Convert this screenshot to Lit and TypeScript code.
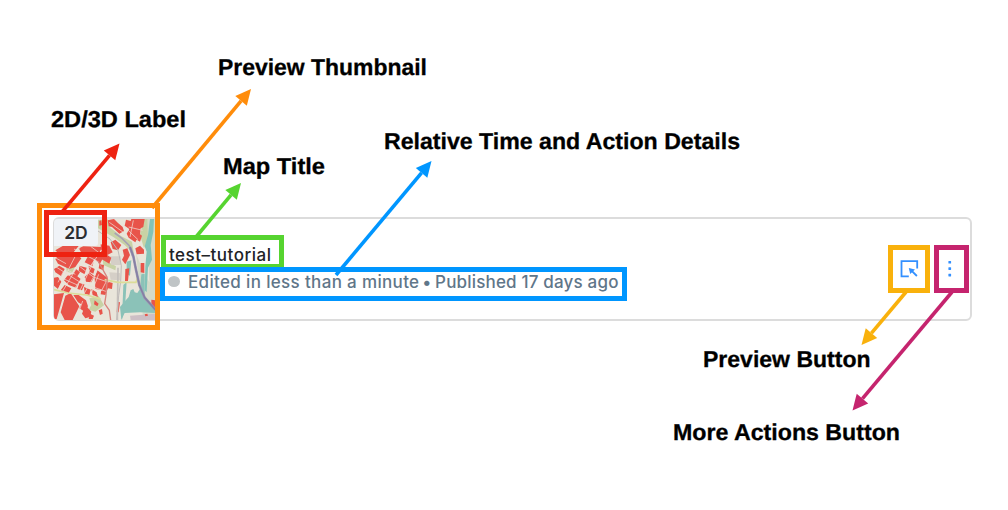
import { LitElement, html, svg, css } from "lit";
import { customElement } from "lit/decorators.js";

@customElement("map-thumbnail")
class MapThumbnail extends LitElement {
  static styles = css`
    :host { display: block; position: relative; width: 104px; height: 101px; margin-left: -1px; overflow: hidden; border-radius: 4px 0 0 4px; }
    svg { display: block; width: 100%; height: 100%; }
    .badge {
      position: absolute; left: 0; top: 0; width: 44px; height: 27px;
      display: flex; align-items: center; justify-content: center;
      background: #f0f3f7; color: #2b2d31; border-radius: 0 0 3px 0;
      font: 600 17.5px/27px Inter, "Liberation Sans", sans-serif;
    }
  `;
  render() {
    return html`
      <svg viewBox="72 72 312 303" preserveAspectRatio="none" aria-hidden="true">
        <rect x="70" y="68" width="320" height="310" fill="#e9e5da" />
        <g fill="#c8d2a5">
          <path d="M204 76L232 72L238 96L274 124L306 140L312 178L284 150L250 126L204 100Z" />
          <path d="M340 72H364L354 130L342 160L330 120Z" />
          <path d="M178 310L206 303L222 331L196 350L176 344L184 330Z" />
          <path d="M108 212L128 204L136 214L126 234L110 230Z" />
          <path d="M218 192L258 214L256 226L220 210Z" />
        </g>
        <path d="M318 175L340 230L358 262L352 72H384V375H340Z" fill="#d4dac8" />
        <path d="M360 72H372L370 110L362 150L366 194L354 218L350 292L344 286L346 212L350 170L344 154L354 120Z" fill="#82c3b8" />
        <path d="M274 375L270 336L280 324L296 306L302 286L310 282L314 292L322 294L330 282L334 238L344 236L344 304L362 328L376 348V354L330 352L284 354Z" fill="#8bc2b8" />
        <path d="M276 375L280 270L290 260L286 322Z M290 200L304 196L300 242L290 238Z" fill="#8bc2b8" />
        <path d="M300 362L376 356V375H302Z" fill="#cdbfc5" />
        <path d="M240 184H272V210H244Z M238 232L270 234V256L242 254Z" fill="#d5cfc7" />
        <g fill="#e8544a">
          <path d="M76 166L98 153H146L132 170L154 190L136 216L118 222L84 206L76 192L88 178Z" />
          <path d="M146 160L160 154L216 156L208 174L222 184L210 206L192 192L188 214L164 202L174 184L158 180Z" />
          <path d="M72 222L88 212L104 222L94 244L76 232Z M72 248L84 246L94 260L84 282L72 272Z" />
          <path d="M112 242L128 238L138 222L150 232L142 244L152 252L138 278L116 270L102 256Z" />
          <path d="M104 270L124 280L116 294L92 286Z M148 212L170 218L164 238L146 228Z" />
          <path d="M164 246L178 232L194 244L184 262L168 260Z M148 264L164 268L156 286L142 282Z" />
          <path d="M72 298L102 294L92 330L80 372H72Z M106 302L122 294L148 334L128 375H104L92 352Z" />
          <path d="M130 300L146 300L168 316L174 334L164 350L148 340L154 328L144 322Z" />
          <path d="M166 330L184 350L180 366L166 370L156 356Z M162 276L182 284L178 300L164 296Z" />
          <path d="M194 248L202 226L218 238L232 248L234 260L248 264L246 282L234 280L226 300L212 298L214 284L196 282Z" />
          <path d="M184 282L200 292L204 306L188 300Z M176 212L194 222L190 236L178 230Z M208 208L222 210L220 226L206 220Z" />
          <path d="M233 76L252 72L264 84L278 96L282 108L268 116L246 96L236 94Z" />
          <path d="M288 74L302 78L304 72H344L340 96L332 100L330 118L336 122L330 140L320 134L316 142L296 128L290 116L298 102L284 92Z" />
          <path d="M242 142L256 134L274 150L264 166L248 162Z M278 164L292 160L300 180L294 192L286 208L276 194L282 182Z" />
          <path d="M316 160L330 152L342 164V176L320 178Z M212 148L238 152L248 172L232 180L244 188L238 206L214 192Z" />
          <path d="M286 222L298 220L294 258H285Z M332 204H343V234L332 232Z M206 346L216 342L218 356L210 360Z M262 320L270 322L266 352H260Z" />
          <path d="M364 314L376 316V342L364 334Z M344 358L352 356L354 362L346 364Z M180 356L192 362L188 372H176Z M194 316L206 326L202 334L192 328Z" />
          <path d="M208 78L214 76L216 90L208 92Z M222 106L230 110L228 122L218 118Z" />
        </g>
        <g fill="none" stroke="#f0dcd4" stroke-width="2.2">
          <path d="M72 212L154 264L230 290 M84 284L150 156 M134 280L216 164 M96 292L138 222 M160 300L202 226 M204 200L132 162" />
          <path d="M72 186L108 206 M102 252L142 270 M146 212L190 246L236 262 M150 286L192 198 M182 154L216 180 M286 98L324 134 M310 76L300 126 M238 82L280 112" />
          <path d="M158 318L146 352 M182 300L206 238 M214 288L238 242 M84 262L100 230 M114 226L136 238" />
          <path d="M296 96L338 106" />
        </g>
        <path d="M204 108L240 132L264 166L274 212L272 260L266 302L260 375" fill="none" stroke="#bdb9b8" stroke-width="3" />
        <path d="M264 218L262 375" fill="none" stroke="#c4c0bc" stroke-width="5" />
        <path d="M72 284L114 294L170 300L212 312 M224 254L264 262L318 262L324 244" fill="none" stroke="#dbdc98" stroke-width="5" />
        <path d="M232 248L228 300L224 326L238 346L242 375 M204 198L232 248" fill="none" stroke="#d7837c" stroke-width="4" />
        <path d="M254 114L276 130L298 152L308 184" fill="none" stroke="#a7a2b4" stroke-width="5" />
        <path d="M300 156L310 184L318 224L328 270L344 308L378 346" fill="none" stroke="#a09ab5" stroke-width="8" />
        <path d="M300 156L310 184L318 224L328 270L344 308L378 346" fill="none" stroke="#8580a4" stroke-width="5" />
      </svg>
      <span class="badge">2D</span>`;
  }
}

@customElement("map-card")
class MapCard extends LitElement {
  static styles = css`
    :host {
      display: flex; box-sizing: border-box; width: 919px; height: 104px;
      border: 2px solid #dcdcdc; border-radius: 6px; background: #fff;
      font-family: Inter, "Liberation Sans", sans-serif;
    }
    .body { flex: 1; padding: 25px 0 0 11px; }
    .title { font-size: 17px; line-height: 22px; font-weight: 500; color: #222326; letter-spacing: 0.5px; white-space: nowrap; }
    .meta { display: flex; align-items: center; gap: 8px; margin-top: 4px; height: 23px; color: #5f7689; font-size: 17px; font-weight: 450; letter-spacing: 0.34px; white-space: nowrap; }
    .bullet { margin: 0 -1.5px 0 -2px; }
    .published { letter-spacing: 0.18px; }
    .dot { width: 12px; height: 11px; margin-left: -1px; border-radius: 50%; background: #bfc4c6; }
    .actions { display: flex; align-items: center; gap: 28px; padding-right: 17px; }
    .actions svg { display: block; }
  `;
  render() {
    return html`
      <map-thumbnail></map-thumbnail>
      <div class="body">
        <div class="title">test–tutorial</div>
        <div class="meta"><span class="dot"></span><span class="details">Edited in less than a minute <span class="bullet">•</span> <span class="published">Published 17 days ago</span></span></div>
      </div>
      <div class="actions">
        <svg width="20" height="20" viewBox="0 0 20 20" fill="none" stroke="#3390ff" stroke-width="1.8">
          <path d="M9.8 17.3H2.5V2.1H18.2V9.4M17.9 17L11.2 10.3" />
          <path d="M9.8 9L16 10.4L11.2 15Z" fill="#3390ff" stroke="none" />
        </svg>
        <svg width="6" height="20" viewBox="0 0 6 20" fill="#3390ff">
          <rect x="1.4" y="1.9" width="2.7" height="2.7" rx=".4" />
          <rect x="1.4" y="8.3" width="2.7" height="2.7" rx=".4" />
          <rect x="1.4" y="14.7" width="2.7" height="2.7" rx=".4" />
        </svg>
      </div>`;
  }
}

type Box = [x: number, y: number, w: number, h: number];
interface Note {
  text: string; color: string; x: number; y: number; width: number;
  box: Box; line: [number, number, number, number];
}

const notes: Note[] = [
  { text: "Preview Thumbnail", color: "#ff8c0a", x: 218, y: 75, width: 209, box: [37, 203, 123, 127], line: [152, 208, 251, 89] },
  { text: "2D/3D Label", color: "#ee2211", x: 51, y: 127, width: 135, box: [44, 210, 63, 47], line: [62, 212, 119.5, 143.5] },
  { text: "Map Title", color: "#56d430", x: 223, y: 174, width: 102, box: [161, 235, 123, 34], line: [196, 237, 241, 183] },
  { text: "Relative Time and Action Details", color: "#0096ff", x: 384, y: 149, width: 356, box: [160, 267, 467, 34], line: [336, 275, 431.5, 161] },
  { text: "Preview Button", color: "#f9b10c", x: 703, y: 367, width: 167.5, box: [888, 245, 42, 48], line: [906, 292, 861.5, 345] },
  { text: "More Actions Button", color: "#c5246e", x: 673, y: 440, width: 227, box: [934, 245, 35, 48], line: [952, 292, 852.5, 410.5] },
];

@customElement("app-root")
class AppRoot extends LitElement {
  static styles = css`
    :host { display: block; position: relative; box-sizing: border-box; width: 1008px; height: 510px; padding: 217px 0 0 53px; background: #fff; overflow: hidden; }
    .notes { position: absolute; left: 0; top: 0; width: 1008px; height: 510px; pointer-events: none; }
    .label { font: 700 23px "Liberation Sans", Arial, sans-serif; fill: #000; stroke: #000; stroke-width: 0.3px; text-rendering: geometricPrecision; }
  `;

  private arrow(n: Note) {
    const [x1, y1, x2, y2] = n.line;
    const len = Math.hypot(x2 - x1, y2 - y1);
    const ux = (x2 - x1) / len;
    const uy = (y2 - y1) / len;
    const bx = x2 - ux * 15.5;
    const by = y2 - uy * 15.5;
    const head = `${x2},${y2} ${bx - uy * 7.5},${by + ux * 7.5} ${bx + uy * 7.5},${by - ux * 7.5}`;
    return svg`<line x1=${x1} y1=${y1} x2=${bx} y2=${by} stroke=${n.color} stroke-width="3.6" />
      <polygon points=${head} fill=${n.color} />`;
  }

  render() {
    return html`
      <map-card></map-card>
      <svg class="notes" viewBox="0 0 1008 510">
        ${notes.map(n => svg`
          <rect x=${n.box[0] + 2.5} y=${n.box[1] + 2.5} width=${n.box[2] - 5} height=${n.box[3] - 5} fill="none" stroke=${n.color} stroke-width="5" />
          ${this.arrow(n)}
          <text class="label" x=${n.x} y=${n.y} textLength=${n.width} lengthAdjust="spacingAndGlyphs">${n.text}</text>`)}
      </svg>`;
  }
}
